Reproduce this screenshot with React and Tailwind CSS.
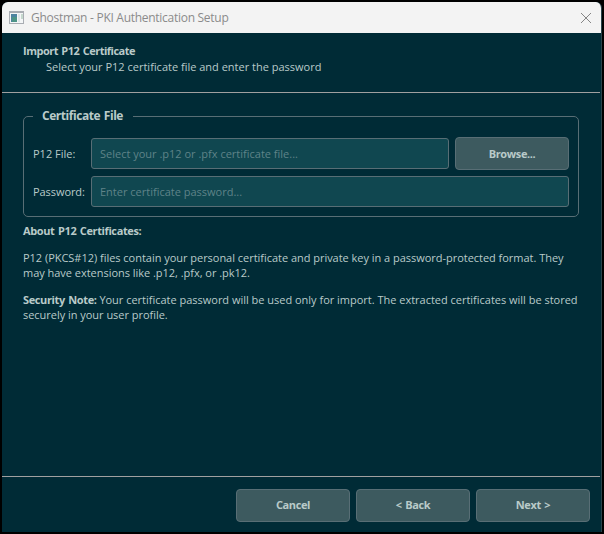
const button =
  "flex h-[33px] w-[114px] items-center justify-center rounded-[4px] border border-[#586e75] bg-[#3d5a5f] font-bold tracking-[-0.36px] [word-spacing:1px]";
const input =
  "h-[31px] min-w-0 rounded-[3px] border border-[#586e75] bg-[#104750] px-2 text-[#e5e5e5] placeholder:text-[#5f8388] placeholder:opacity-100 outline-none";

function WindowIcon() {
  return (
    <svg width="16" height="14" viewBox="0 0 16 14" shapeRendering="crispEdges">
      <rect x="0" y="0" width="15" height="13" fill="#a9adb3" />
      <rect x="1" y="2" width="13" height="10" fill="#f4f6f7" />
      <rect x="2" y="3" width="6" height="8" fill="#4d83a0" />
      <rect x="3" y="6" width="5" height="5" fill="#4d9486" />
      <rect x="9" y="3" width="2" height="8" fill="#dfe6e9" />
      <rect x="12" y="3" width="2" height="5" fill="#c5d8cd" />
    </svg>
  );
}

export default function App() {
  return (
    <div className="h-[534px] w-[604px] bg-black pt-[2px] pl-[2px] font-['Open_Sans','Noto_Sans',sans-serif] text-[11px] text-[#b9cac9]">
      <div className="flex h-[530px] w-[600px] flex-col overflow-hidden rounded-t-[6px] border-r border-[#29434b] bg-[#002b36]">
        <header className="flex h-[31px] shrink-0 items-center bg-[#f3f3f3] pr-[9px] pl-[7px] text-[12px] text-[#8b8b8b]">
          <WindowIcon />
          <h1 className="ml-[6px] flex-1 pt-px tracking-[-0.28px]">Ghostman - PKI Authentication Setup</h1>
          <svg width="12" height="12" viewBox="0 0 12 12" stroke="#858585" strokeWidth="1">
            <path d="M1 1 11 11M11 1 1 11" />
          </svg>
        </header>
        <section className="h-[59px] shrink-0 pt-[10px] pl-[21px] leading-4">
          <h2 className="font-bold tracking-[-0.5px] [word-spacing:1px]">Import P12 Certificate</h2>
          <p className="pl-[23px]">Select your P12 certificate file and enter the password</p>
        </section>
        <div className="mr-px h-px shrink-0 bg-[#a0a0a0]" />
        <main className="flex-1 px-[21px] pt-[15px]">
          <fieldset className="h-[109px] w-[556px] rounded-[5px] border border-[#586e75] px-[9px]">
            <legend className="h-[17px] w-[100px] whitespace-nowrap px-[9px] text-[12px] font-bold leading-[15px] tracking-[-0.45px] [word-spacing:1px]">
              Certificate File
            </legend>
            <div className="flex items-center pt-3">
              <label className="w-[58px] pt-[2px]">P12 File:</label>
              <input className={`${input} w-[358px]`} placeholder="Select your .p12 or .pfx certificate file..." />
              <button className={`${button} ml-[6px] pt-px`}>Browse...</button>
            </div>
            <div className="mt-[6px] flex items-center">
              <label className="w-[58px] pt-[2px] tracking-[-0.07px]">Password:</label>
              <input className={`${input} w-[478px]`} placeholder="Enter certificate password..." />
            </div>
          </fieldset>
          <div className="pt-[6px] leading-[15px] tracking-[-0.028px]">
            <p className="font-bold tracking-[-0.38px] [word-spacing:1px]">About P12 Certificates:</p>
            <p className="mt-3">
              P12 (PKCS#12) files contain your personal certificate and private key in a password-protected format. They
              <br />
              may have extensions like .p12, .pfx, or .pk12.
            </p>
            <p className="mt-3">
              <b className="font-bold tracking-[-0.38px] [word-spacing:1px]">Security Note:</b>
              <span className="tracking-[-0.012px]"> Your certificate password will be used only for import. The extracted certificates will be stored</span>
              <br />
              securely in your user profile.
            </p>
          </div>
        </main>
        <div className="mr-px h-px shrink-0 bg-[#a0a0a0]" />
        <footer className="flex h-[55px] shrink-0 justify-end gap-[6px] pt-3 pr-[11px]">
          <button className={button}>Cancel</button>
          <button className={button}>&lt; Back</button>
          <button className={button}>Next &gt;</button>
        </footer>
      </div>
    </div>
  );
}
